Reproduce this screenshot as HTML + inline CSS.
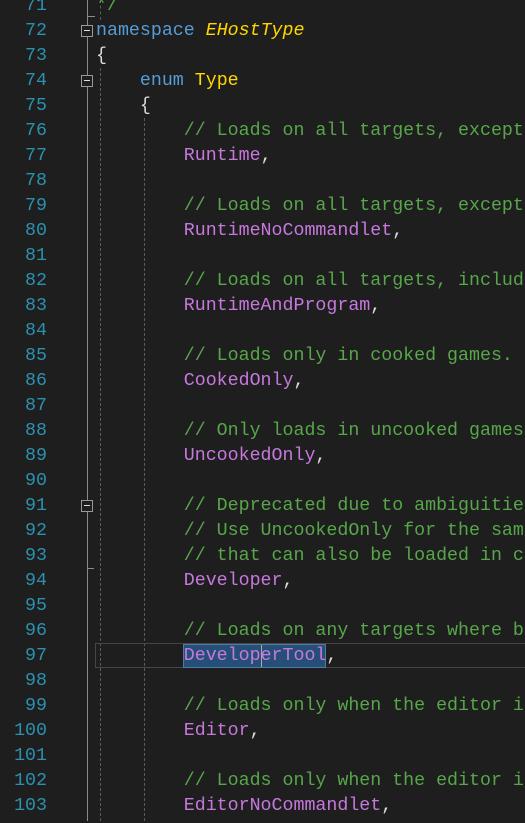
<!DOCTYPE html>
<html><head><meta charset="utf-8"><style>
body{margin:0;width:525px;height:821px;background:#1e1e1e;overflow:hidden;position:relative;font-family:"Liberation Mono",monospace;font-size:18.3px}
#w{position:absolute;left:0;top:1.5px;width:525px;height:821px}
.l{position:absolute;left:0;height:25px;line-height:25px;white-space:pre;width:525px}
.n{position:absolute;right:478px;color:#2b91af;text-align:right}
.c{position:absolute;left:96px;color:#dcdcdc}
.k{color:#569cd6}.y{color:#ffd700}.g{color:#57a64a}.p{color:#c678dd}
.v{position:absolute;width:0;border-left:1px dashed #5a5a5a}
.fold{position:absolute;left:81px;width:10px;height:10px;border:1px solid #999;background:#1e1e1e}
.fold:after{content:"";position:absolute;left:2px;top:4px;width:6px;height:1px;background:#ddd}
</style></head><body>
<div style="position:absolute;left:87px;top:0;width:1px;height:821px;background:#8a8a8a"></div>
<div style="position:absolute;left:87px;top:16px;width:8px;height:1px;background:#8a8a8a"></div>
<div style="position:absolute;left:87px;top:568px;width:7px;height:1px;background:#8a8a8a"></div>
<div class="v" style="left:100px;top:0;height:20px"></div>
<div class="v" style="left:100px;top:68px;height:753px"></div>
<div class="v" style="left:144px;top:118px;height:703px"></div>
<div style="position:absolute;left:95px;top:643px;width:440px;height:23px;border:1px solid #464646"></div>
<div style="position:absolute;left:183px;top:644px;width:143px;height:24px;background:#264f78;border:1px solid #4f7aa6;box-sizing:border-box"></div>
<div style="position:absolute;left:261px;top:645px;width:1px;height:22px;background:#aaa"></div>
<div class="fold" style="top:25px"></div>
<div class="fold" style="top:75px"></div>
<div class="fold" style="top:500px"></div>
<div id="w">
<div class="l" style="top:-7.5px"><span class="n">71</span><span class="c"><span class="g">*/</span></span></div>
<div class="l" style="top:17.5px"><span class="n">72</span><span class="c"><span class="k">namespace</span> <i class="y">EHostType</i></span></div>
<div class="l" style="top:42.5px"><span class="n">73</span><span class="c">{</span></div>
<div class="l" style="top:67.5px"><span class="n">74</span><span class="c">    <span class="k">enum</span> <span class="y">Type</span></span></div>
<div class="l" style="top:92.5px"><span class="n">75</span><span class="c">    {</span></div>
<div class="l" style="top:117.5px"><span class="n">76</span><span class="c">        <span class="g">// Loads on all targets, except</span></span></div>
<div class="l" style="top:142.5px"><span class="n">77</span><span class="c">        <span class="p">Runtime</span>,</span></div>
<div class="l" style="top:167.5px"><span class="n">78</span></div>
<div class="l" style="top:192.5px"><span class="n">79</span><span class="c">        <span class="g">// Loads on all targets, except</span></span></div>
<div class="l" style="top:217.5px"><span class="n">80</span><span class="c">        <span class="p">RuntimeNoCommandlet</span>,</span></div>
<div class="l" style="top:242.5px"><span class="n">81</span></div>
<div class="l" style="top:267.5px"><span class="n">82</span><span class="c">        <span class="g">// Loads on all targets, includ</span></span></div>
<div class="l" style="top:292.5px"><span class="n">83</span><span class="c">        <span class="p">RuntimeAndProgram</span>,</span></div>
<div class="l" style="top:317.5px"><span class="n">84</span></div>
<div class="l" style="top:342.5px"><span class="n">85</span><span class="c">        <span class="g">// Loads only in cooked games.</span></span></div>
<div class="l" style="top:367.5px"><span class="n">86</span><span class="c">        <span class="p">CookedOnly</span>,</span></div>
<div class="l" style="top:392.5px"><span class="n">87</span></div>
<div class="l" style="top:417.5px"><span class="n">88</span><span class="c">        <span class="g">// Only loads in uncooked games</span></span></div>
<div class="l" style="top:442.5px"><span class="n">89</span><span class="c">        <span class="p">UncookedOnly</span>,</span></div>
<div class="l" style="top:467.5px"><span class="n">90</span></div>
<div class="l" style="top:492.5px"><span class="n">91</span><span class="c">        <span class="g">// Deprecated due to ambiguitie</span></span></div>
<div class="l" style="top:517.5px"><span class="n">92</span><span class="c">        <span class="g">// Use UncookedOnly for the sam</span></span></div>
<div class="l" style="top:542.5px"><span class="n">93</span><span class="c">        <span class="g">// that can also be loaded in c</span></span></div>
<div class="l" style="top:567.5px"><span class="n">94</span><span class="c">        <span class="p">Developer</span>,</span></div>
<div class="l" style="top:592.5px"><span class="n">95</span></div>
<div class="l" style="top:617.5px"><span class="n">96</span><span class="c">        <span class="g">// Loads on any targets where b</span></span></div>
<div class="l" style="top:642.5px"><span class="n">97</span><span class="c">        <span class="p">DeveloperTool</span>,</span></div>
<div class="l" style="top:667.5px"><span class="n">98</span></div>
<div class="l" style="top:692.5px"><span class="n">99</span><span class="c">        <span class="g">// Loads only when the editor i</span></span></div>
<div class="l" style="top:717.5px"><span class="n">100</span><span class="c">        <span class="p">Editor</span>,</span></div>
<div class="l" style="top:742.5px"><span class="n">101</span></div>
<div class="l" style="top:767.5px"><span class="n">102</span><span class="c">        <span class="g">// Loads only when the editor i</span></span></div>
<div class="l" style="top:792.5px"><span class="n">103</span><span class="c">        <span class="p">EditorNoCommandlet</span>,</span></div>
</div>
</body></html>
